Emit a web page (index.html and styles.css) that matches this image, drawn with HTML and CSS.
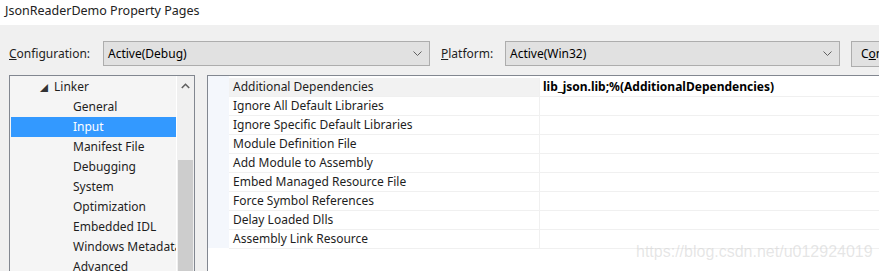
FILE: index.html
```html
<!DOCTYPE html>
<html lang="en">

<head>
  <meta charset="UTF-8">
  <title>JsonReaderDemo Property Pages</title>
  <link rel="stylesheet" href="styles.css">
</head>

<body>
  <div class="window">
    <div class="title-bar">JsonReaderDemo Property Pages</div>

    <div class="toolbar">
      <label class="label label-config"><u>C</u>onfiguration:</label>
      <div class="combo combo-config">
        <span>Active(Debug)</span>
        <svg class="chevron" width="9" height="5" viewBox="0 0 9 5"><path d="M0.5 0.5 L4.5 4.5 L8.5 0.5" fill="none" stroke="#606060" stroke-width="1"/></svg>
      </div>
      <label class="label label-platform"><u>P</u>latform:</label>
      <div class="combo combo-platform">
        <span>Active(Win32)</span>
        <svg class="chevron" width="9" height="5" viewBox="0 0 9 5"><path d="M0.5 0.5 L4.5 4.5 L8.5 0.5" fill="none" stroke="#606060" stroke-width="1"/></svg>
      </div>
      <button class="btn">C<u>o</u>nfiguration Manager...</button>
    </div>

    <div class="panels">
      <div class="tree-panel">
        <ul class="tree">
          <li class="tree-item parent"><span class="expander">&#9698;</span>Linker</li>
          <li class="tree-item child">General</li>
          <li class="tree-item child selected">Input</li>
          <li class="tree-item child">Manifest File</li>
          <li class="tree-item child">Debugging</li>
          <li class="tree-item child">System</li>
          <li class="tree-item child">Optimization</li>
          <li class="tree-item child">Embedded IDL</li>
          <li class="tree-item child">Windows Metadata</li>
          <li class="tree-item child">Advanced</li>
        </ul>
        <div class="scrollbar">
          <div class="scroll-up">
            <svg width="9" height="6" viewBox="0 0 9 6"><path d="M0.8 5 L4.5 1.3 L8.2 5" fill="none" stroke="#606060" stroke-width="1.6"/></svg>
          </div>
          <div class="scroll-thumb"></div>
        </div>
      </div>

      <div class="grid-panel">
        <div class="grid-margin"></div>
        <div class="grid">
          <div class="row current">
            <div class="name">Additional Dependencies</div>
            <div class="value">lib_json.lib;%(AdditionalDependencies)</div>
          </div>
          <div class="row"><div class="name">Ignore All Default Libraries</div><div class="value"></div></div>
          <div class="row"><div class="name">Ignore Specific Default Libraries</div><div class="value"></div></div>
          <div class="row"><div class="name">Module Definition File</div><div class="value"></div></div>
          <div class="row"><div class="name">Add Module to Assembly</div><div class="value"></div></div>
          <div class="row"><div class="name">Embed Managed Resource File</div><div class="value"></div></div>
          <div class="row"><div class="name">Force Symbol References</div><div class="value"></div></div>
          <div class="row"><div class="name">Delay Loaded Dlls</div><div class="value"></div></div>
          <div class="row"><div class="name">Assembly Link Resource</div><div class="value"></div></div>
        </div>
      </div>
    </div>

    <div class="watermark">https://blog.csdn.net/u012924019</div>
  </div>
</body>

</html>
```

FILE: styles.css
```css
body {
  margin: 0;
  background-color: #f0f0f0;
  font-family: 'Noto Sans', 'Noto Sans CJK SC', sans-serif;
  font-size: 12px;
  color: #000;
  overflow: hidden;
}

.window {
  width: 879px;
  height: 271px;
  position: relative;
  overflow: hidden;
}

.title-bar {
  height: 25px;
  line-height: 22px;
  padding-left: 5px;
  background-color: #fff;
  font-size: 12.5px;
  color: #222;
}

.toolbar {
  display: flex;
  align-items: center;
  height: 25px;
  margin-top: 16px;
  white-space: nowrap;
}

.toolbar > * {
  flex-shrink: 0;
}

.label {
  display: block;
  color: #1e1e1e;
}

.label-config {
  margin-left: 9px;
  width: 94px;
}

.label-platform {
  margin-left: 11px;
  width: 64px;
}

.combo {
  box-sizing: border-box;
  height: 25px;
  border: 1px solid #adadad;
  background-color: #e1e1e1;
  display: flex;
  align-items: center;
  justify-content: space-between;
  padding: 0 7px 0 4px;
}

.combo-config {
  width: 327px;
}

.combo-platform {
  width: 335px;
}

.btn {
  margin-left: 11px;
  height: 26px;
  padding: 0 0 0 9px;
  border: 1px solid #adadad;
  background-color: #e1e1e1;
  font: inherit;
  text-align: left;
  width: 150px;
}

.panels {
  display: flex;
  margin-top: 9px;
  gap: 12px;
  padding-left: 9px;
}

.tree-panel {
  width: 186px;
  height: 220px;
  box-sizing: border-box;
  border: 1px solid #828790;
  display: flex;
  background-color: #f5f5f5;
  flex-shrink: 0;
}

.tree {
  list-style: none;
  margin: 0;
  padding: 1px 0 0 1px;
  flex: 1;
  overflow: hidden;
  border-right: 1px solid #fff;
}

.tree-item {
  height: 20px;
  line-height: 20px;
  white-space: nowrap;
  overflow: hidden;
  color: #1e1e1e;
}

.tree-item.parent {
  padding-left: 29px;
}

.expander {
  display: inline-block;
  width: 14px;
  font-size: 8px;
  color: #333;
}

.tree-item.child {
  padding-left: 62px;
}

.tree-item.selected {
  background-color: #3399ff;
  color: #fff;
}

.scrollbar {
  width: 17px;
  background-color: #f0f0f0;
  display: flex;
  flex-direction: column;
  align-items: center;
}

.scroll-up {
  height: 20px;
  display: flex;
  align-items: center;
  justify-content: center;
}

.scroll-thumb {
  width: 15px;
  margin-top: 64px;
  flex: 1;
  background-color: #cdcdcd;
}

.grid-panel {
  flex: 1;
  margin-right: -20px;
  height: 220px;
  box-sizing: border-box;
  border: 1px solid #828790;
  border-right: none;
  background-color: #fff;
  display: flex;
  align-items: flex-start;
}

.grid-margin {
  width: 21px;
  height: 172px;
  background-color: #f4f7fc;
}

.grid {
  flex: 1;
  padding-top: 2px;
}

.row {
  display: flex;
  height: 19px;
  line-height: 18px;
  box-sizing: border-box;
  border-bottom: 1px solid #f0f0f0;
}

.name {
  width: 306px;
  flex-shrink: 0;
  padding-left: 4px;
  border-right: 1px solid #f0f0f0;
  white-space: nowrap;
  color: #1e1e1e;
}

.row.current .name {
  background-color: #f2f2f2;
}

.value {
  flex: 1;
  padding-left: 3px;
  font-weight: bold;
  white-space: nowrap;
}

.watermark {
  position: absolute;
  left: 636px;
  top: 243px;
  font-family: 'Liberation Sans', Arial, sans-serif;
  font-size: 16px;
  color: rgba(200, 200, 200, 0.45);
  white-space: nowrap;
}
```
